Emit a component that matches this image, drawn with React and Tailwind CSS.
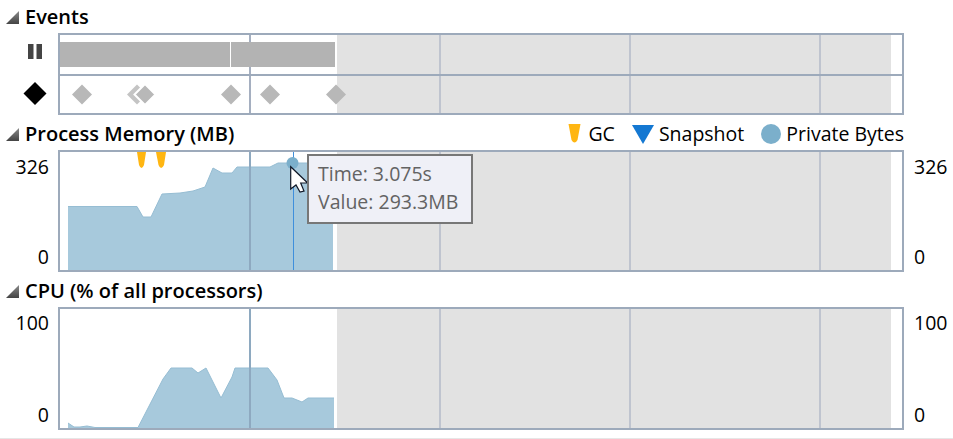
const gridLines = [250, 440, 630, 820]
const diamonds = [82, 231, 270, 336]

const memoryTop = '68,206.5 137,206.5 143,217 151,217 162,194 180,193 193,191 205,187 213,168 222,173 232,173 237,167 270,167 278,163 333,163'
const cpuTop = '68,423 74,427 80,427 87,426 95,427.5 138,427.5 147,410 163,379 171,368 192,368 198,373 206,368 213,382 221,398 232,377 235,368 268,368 277,380 284,398 292,398 302,402 308,398 334,398'

function ChartBackdrop({ top, bottom }) {
  return (
    <>
      <rect x="337" y={top} width="554" height={bottom - top} fill="#e2e2e2" />
      {gridLines.map((x) => (
        <rect key={x} x={x - 1} y={top} width="2" height={bottom - top} fill={x === 250 ? '#a5afc0' : '#bfc4cf'} />
      ))}
    </>
  )
}

function AreaPlot({ line, start, end, bottom }) {
  return (
    <>
      <polygon points={`${start},${bottom} ${line} ${end},${bottom}`} fill="#a7c9dc" />
      <polyline points={line} fill="none" stroke="#96bdd3" strokeWidth="1" />
    </>
  )
}

function SectionHeader({ title, children }) {
  return (
    <div className="flex h-[25px] items-center pb-[7px] pr-[49px]">
      <svg className="ml-[6px] mr-[6px] shrink-0" width="13" height="13" viewBox="0 0 13 13">
        <defs>
          <linearGradient id="caret" x1="0" y1="0" x2="0" y2="1">
            <stop offset="0" stopColor="#8a8a8a" />
            <stop offset="1" stopColor="#444444" />
          </linearGradient>
        </defs>
        <polygon points="13,0 13,13 0,13" fill="url(#caret)" />
      </svg>
      <span className="text-[20px] font-semibold text-black">{title}</span>
      {children}
    </div>
  )
}

function AxisLabels({ max, paddingClass, align }) {
  return (
    <div className={`flex w-[58px] shrink-0 flex-col justify-between leading-[24px] ${paddingClass} ${align}`}>
      <span>{max}</span>
      <span>0</span>
    </div>
  )
}

function EventsChart() {
  return (
    <div className="flex">
      <div className="relative w-[58px] shrink-0">
        <svg className="absolute left-0 top-0" width="58" height="82" viewBox="0 33 58 82">
          <rect x="28" y="44" width="5.5" height="15" fill="#444444" />
          <rect x="36.5" y="44" width="5.5" height="15" fill="#444444" />
          <polygon points="35,82 46.5,93.5 35,105 23.5,93.5" fill="#000000" />
        </svg>
      </div>
      <div className="h-[82px] w-[846px] border-2 border-[#9daabb] bg-white">
        <svg className="block" width="842" height="78" viewBox="60 35 842 78">
          <ChartBackdrop top={35} bottom={113} />
          <rect x="60" y="42" width="170" height="25" fill="#b3b3b3" />
          <rect x="231" y="42" width="104" height="25" fill="#b3b3b3" />
          <rect x="60" y="74" width="842" height="2" fill="#9daabb" />
          <polygon points="137,84.5 147,94.5 137,104.5 127,94.5" fill="#c4c4c4" />
          <polygon points="145,84 155.5,94.5 145,105 134.5,94.5" fill="#b8b8b8" stroke="#ffffff" strokeWidth="2" />
          {diamonds.map((x) => (
            <polygon key={x} points={`${x},84.5 ${x + 10},94.5 ${x},104.5 ${x - 10},94.5`} fill="#b8b8b8" />
          ))}
        </svg>
      </div>
    </div>
  )
}

function Legend() {
  return (
    <div className="ml-auto flex items-center text-black">
      <svg className="mr-[7px]" width="13" height="20" viewBox="0 0 13 20">
        <path d="M0.5 0 H12.5 L9.5 16 Q6.5 21 3.5 16 Z" fill="#ffb612" />
      </svg>
      <span className="mr-[17px]">GC</span>
      <svg className="mr-[5px]" width="22" height="19" viewBox="0 0 22 19">
        <polygon points="0,0 22,0 11,19" fill="#1478d2" />
      </svg>
      <span className="mr-[17px]">Snapshot</span>
      <span className="mr-[5px] h-[20px] w-[20px] rounded-full bg-[#7bafcb]" />
      <span>Private Bytes</span>
    </div>
  )
}

function MemoryChart() {
  return (
    <div className="flex">
      <AxisLabels max="326" paddingClass="pb-[3px] pt-[5px] pr-[9px]" align="text-right" />
      <div className="relative h-[122px] w-[846px] border-2 border-[#9daabb] bg-white">
        <svg className="block" width="842" height="118" viewBox="60 152 842 118">
          <ChartBackdrop top={152} bottom={270} />
          <AreaPlot line={memoryTop} start={68} end={333} bottom={270} />
          <rect x="249" y="152" width="2" height="118" fill="#8ea9c0" />
          <path d="M137 152 H146 L144 165 Q141.5 171 139 165 Z" fill="#ffb612" />
          <path d="M156 152 H166 L164 165 Q161 171 158.5 165 Z" fill="#ffb612" />
          <rect x="293" y="152" width="1" height="118" fill="#3f8fdc" />
          <circle cx="292.5" cy="163" r="6" fill="#7bafcb" />
          <path d="M290.7 166.7 V189 L296 185 L300 192 L304 191 L300.7 183 L307.7 183 Z" fill="#ffffff" stroke="#111827" strokeWidth="1.2" />
        </svg>
        <div className="absolute left-[247px] top-[2px] h-[70px] w-[166px] border-2 border-[#777777] bg-[#eff0f7] pl-[9px] pt-[4px] leading-[28px] text-[#636363]">
          <div>Time: 3.075s</div>
          <div>Value: 293.3MB</div>
        </div>
      </div>
      <AxisLabels max="326" paddingClass="pb-[3px] pt-[5px] pl-[10px]" align="text-left" />
    </div>
  )
}

function CpuChart() {
  return (
    <div className="flex">
      <AxisLabels max="100" paddingClass="pb-[3px] pt-[4px] pr-[9px]" align="text-right" />
      <div className="h-[123px] w-[846px] border-2 border-[#9daabb] bg-white">
        <svg className="block" width="842" height="119" viewBox="60 309 842 119">
          <ChartBackdrop top={309} bottom={428} />
          <AreaPlot line={cpuTop} start={68} end={334} bottom={428} />
          <rect x="249" y="309" width="2" height="119" fill="#8ea9c0" />
        </svg>
      </div>
      <AxisLabels max="100" paddingClass="pb-[3px] pt-[4px] pl-[10px]" align="text-left" />
    </div>
  )
}

export default function App() {
  return (
    <div className="h-[439px] w-[953px] overflow-hidden bg-white pt-[8px] font-['Open_Sans','Noto_Sans',sans-serif] text-[19.5px] text-black">
      <SectionHeader title="Events" />
      <EventsChart />
      <div className="mt-[10px]">
        <SectionHeader title="Process Memory (MB)">
          <Legend />
        </SectionHeader>
        <MemoryChart />
      </div>
      <div className="mt-[10px]">
        <SectionHeader title="CPU (% of all processors)" />
        <CpuChart />
      </div>
      <div className="mt-[8px] h-[1px] bg-[#e6e6e6]" />
    </div>
  )
}
